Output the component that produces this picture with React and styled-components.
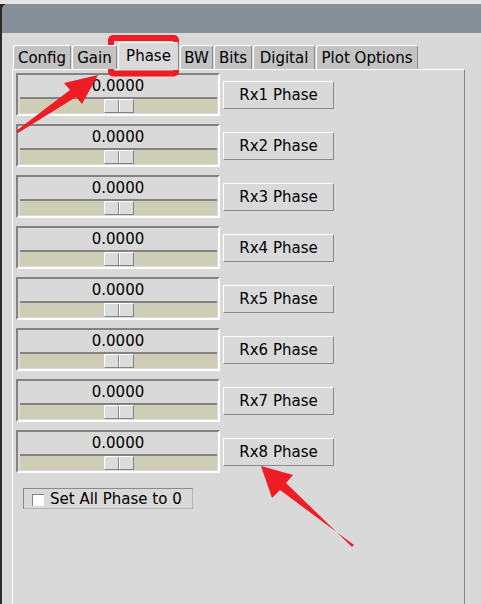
import styled, { createGlobalStyle } from "styled-components";

const GlobalStyle = createGlobalStyle`
  html, body {
    margin: 0;
    padding: 0;
    background: #e9e9e9;
  }
  body {
    font-family: "DejaVu Sans", "Liberation Sans", sans-serif;
  }
`;

const Screen = styled.div`
  position: relative;
  width: 481px;
  height: 604px;
  overflow: hidden;
  display: flex;
  flex-direction: column;
  background: #e9e9e9;
`;

const TopStrip = styled.div`
  height: 4px;
  background: #e6e6e6;
`;

const Desktop = styled.div`
  flex: 1;
  display: flex;
  background: #2b2b2b;
  padding-left: 2px;
  min-height: 0;
`;

const Window = styled.div`
  flex: 1;
  display: flex;
  flex-direction: column;
  background: #d9d9d9;
  border-radius: 6px 0 0 0;
  overflow: hidden;
`;

const TitleBar = styled.div`
  height: 29px;
  background: #878f98;
`;

const WindowBody = styled.div`
  flex: 1;
  display: flex;
  padding: 9px 0 0 10px;
  min-height: 0;
`;

const Notebook = styled.div`
  width: 453px;
  display: flex;
  flex-direction: column;
`;

const TabBar = styled.div`
  display: flex;
  align-items: flex-end;
  gap: 1px;
  height: 27px;
  padding-left: 1px;
  position: relative;
  z-index: 1;
`;

const Tab = styled.div`
  box-sizing: border-box;
  width: ${(p) => p.$width}px;
  height: ${(p) => (p.$active ? 28 : 24)}px;
  margin-bottom: ${(p) => (p.$active ? -1 : 0)}px;
  padding-bottom: ${(p) => (p.$active ? 2 : 0)}px;
  display: flex;
  align-items: center;
  justify-content: center;
  background: ${(p) => (p.$active ? "#d9d9d9" : "#c3c3c3")};
  border-top: 1px solid #ffffff;
  border-left: 1px solid #ffffff;
  border-right: 1px solid #8a8a8a;
  border-radius: 3px 3px 0 0;
  font-size: 15px;
  color: #000;
  white-space: nowrap;
`;

const Panel = styled.div`
  flex: 1;
  display: flex;
  flex-direction: column;
  border-top: 1px solid #ffffff;
  border-left: 1px solid #ffffff;
  border-right: 1px solid #8a8a8a;
  padding: 3px 0 0 3px;
`;

const Row = styled.div`
  display: flex;
  align-items: flex-start;
  margin-bottom: 8px;
`;

const Scale = styled.div`
  box-sizing: border-box;
  width: 204px;
  height: 43px;
  display: flex;
  flex-direction: column;
  border-top: 2px solid #828282;
  border-left: 2px solid #828282;
  border-bottom: 2px solid #ffffff;
  border-right: 2px solid #ffffff;
  background: #d9d9d9;
`;

const ScaleValue = styled.div`
  height: 22px;
  display: flex;
  align-items: center;
  justify-content: center;
  font-size: 15px;
  color: #000;
`;

const Trough = styled.div`
  box-sizing: border-box;
  height: 16px;
  margin: 0 1px 0 2px;
  display: flex;
  justify-content: center;
  border-top: 2px solid #828282;
  background: #cecdb5;
`;

const Thumb = styled.div`
  box-sizing: border-box;
  width: 30px;
  height: 14px;
  display: flex;
  background: #dcdcdc;
  border-top: 1px solid #ffffff;
  border-left: 1px solid #ffffff;
  border-right: 1px solid #828282;
  border-bottom: 1px solid #828282;
`;

const ThumbHalf = styled.div`
  flex: 1;
  border-right: ${(p) => (p.$first ? "1px solid #828282" : "none")};
  border-left: ${(p) => (p.$first ? "none" : "1px solid #ffffff")};
`;

const Button = styled.div`
  box-sizing: border-box;
  width: 111px;
  height: 28px;
  margin: 8px 0 0 3px;
  display: flex;
  align-items: center;
  justify-content: center;
  background: #d9d9d9;
  border-top: 1px solid #ffffff;
  border-left: 1px solid #ffffff;
  border-right: 1px solid #8a8a8a;
  border-bottom: 1px solid #8a8a8a;
  font-size: 15px;
  color: #000;
`;

const CheckFrame = styled.label`
  box-sizing: border-box;
  width: 170px;
  height: 21px;
  margin: 7px 0 0 7px;
  display: flex;
  align-items: center;
  gap: 6px;
  padding-left: 8px;
  border-top: 1px solid #8a8a8a;
  border-left: 1px solid #8a8a8a;
  border-right: 1px solid #b4b4b4;
  border-bottom: 1px solid #b4b4b4;
  font-size: 15px;
  color: #000;
`;

const CheckBox = styled.span`
  box-sizing: border-box;
  width: 12px;
  height: 12px;
  margin-top: 2px;
  background: #ffffff;
  border-top: 1px solid #828282;
  border-left: 1px solid #828282;
`;

const Overlay = styled.svg`
  position: absolute;
  top: 0;
  left: 0;
  pointer-events: none;
`;

const tabs = [
  { name: "Config", width: 58 },
  { name: "Gain", width: 45 },
  { name: "Phase", width: 61, active: true },
  { name: "BW", width: 33 },
  { name: "Bits", width: 38 },
  { name: "Digital", width: 62 },
  { name: "Plot Options", width: 102 },
];

const channels = [1, 2, 3, 4, 5, 6, 7, 8];

const App = () => {
  return (
    <Screen>
      <GlobalStyle />
      <TopStrip />
      <Desktop>
        <Window>
          <TitleBar />
          <WindowBody>
            <Notebook>
              <TabBar>
                {tabs.map((tab) => (
                  <Tab key={tab.name} $width={tab.width} $active={tab.active}>
                    {tab.name}
                  </Tab>
                ))}
              </TabBar>
              <Panel>
                {channels.map((n) => (
                  <Row key={n}>
                    <Scale>
                      <ScaleValue>0.0000</ScaleValue>
                      <Trough>
                        <Thumb>
                          <ThumbHalf $first />
                          <ThumbHalf />
                        </Thumb>
                      </Trough>
                    </Scale>
                    <Button>Rx{n} Phase</Button>
                  </Row>
                ))}
                <CheckFrame>
                  <CheckBox />
                  Set All Phase to 0
                </CheckFrame>
              </Panel>
            </Notebook>
          </WindowBody>
        </Window>
      </Desktop>

      {/* red annotations drawn over the screenshot */}
      <Overlay width="481" height="604" viewBox="0 0 481 604">
        <rect
          x="111"
          y="38"
          width="65"
          height="35.5"
          rx="2"
          fill="none"
          stroke="#ee1c25"
          strokeWidth="6"
        />
        <polygon
          fill="#ee1c25"
          points="16,131 70,90 64,83 98,75 82,104 76,97 18,133"
        />
        <polygon
          fill="#ee1c25"
          points="354,545 280,490 272,498 261,466 293,475 286,483 352,547"
        />
      </Overlay>
    </Screen>
  );
};

export default App;
